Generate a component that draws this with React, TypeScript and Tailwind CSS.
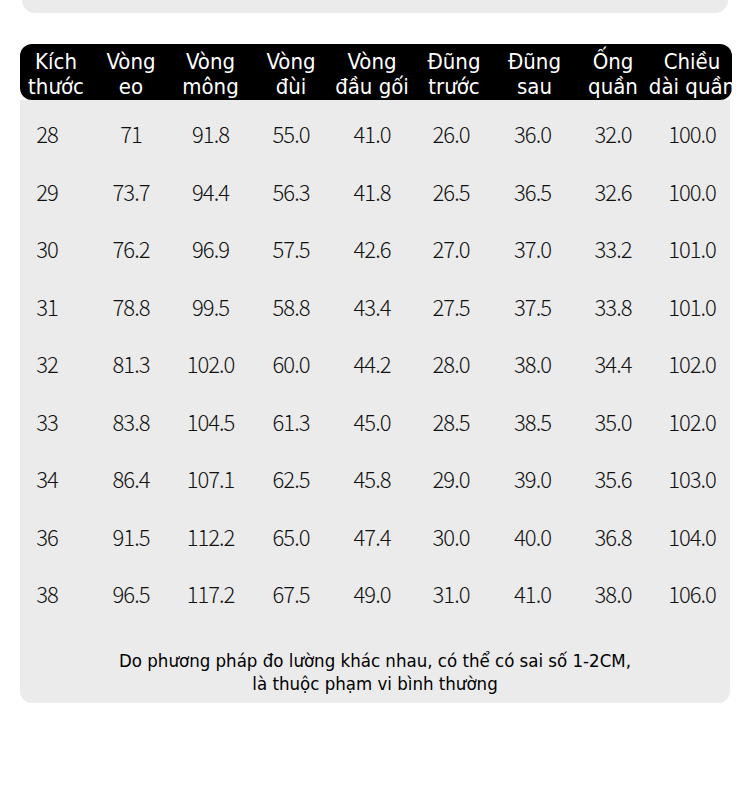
const headers: [string, string][] = [
  ['Kích', 'thước'],
  ['Vòng', 'eo'],
  ['Vòng', 'mông'],
  ['Vòng', 'đùi'],
  ['Vòng', 'đầu gối'],
  ['Đũng', 'trước'],
  ['Đũng', 'sau'],
  ['Ống', 'quần'],
  ['Chiều', 'dài quần'],
];

const rows: string[][] = [
  ['28', '71', '91.8', '55.0', '41.0', '26.0', '36.0', '32.0', '100.0'],
  ['29', '73.7', '94.4', '56.3', '41.8', '26.5', '36.5', '32.6', '100.0'],
  ['30', '76.2', '96.9', '57.5', '42.6', '27.0', '37.0', '33.2', '101.0'],
  ['31', '78.8', '99.5', '58.8', '43.4', '27.5', '37.5', '33.8', '101.0'],
  ['32', '81.3', '102.0', '60.0', '44.2', '28.0', '38.0', '34.4', '102.0'],
  ['33', '83.8', '104.5', '61.3', '45.0', '28.5', '38.5', '35.0', '102.0'],
  ['34', '86.4', '107.1', '62.5', '45.8', '29.0', '39.0', '35.6', '103.0'],
  ['36', '91.5', '112.2', '65.0', '47.4', '30.0', '40.0', '36.8', '104.0'],
  ['38', '96.5', '117.2', '67.5', '49.0', '31.0', '41.0', '38.0', '106.0'],
];

// column widths picked so the centres line up with the picture
const cols = 'grid grid-cols-[72px_78px_81px_80px_82px_82px_79px_78px_80px]';

export default function App() {
  return (
    <div className="w-[750px] h-[786px] bg-white overflow-hidden">
      {/* tail of the panel above */}
      <div className="mx-[22px] h-[13px] bg-[#ebebeb] rounded-b-[14px]" />

      <div className="mx-[20px] w-[712px] mt-[31px]">
        {/* ─── header bar ─── */}
        <div
          className={`${cols} h-[56px] pt-[3px] bg-black rounded-[12px] overflow-hidden items-center text-white text-[22px] leading-[25px]`}
          style={{ fontFamily: '"DejaVu Sans Condensed", "DejaVu Sans", sans-serif' }}
        >
          {headers.map(([a, b], i) => (
            <div key={i} className="flex flex-col items-center whitespace-nowrap">
              <span>{a}</span>
              <span>{b}</span>
            </div>
          ))}
        </div>

        {/* ─── table body ─── */}
        <div className="bg-[#ebebeb] rounded-b-[12px] w-[710px] pt-[5px] pb-[8px]">
          {rows.map((r, ri) => (
            <div
              key={ri}
              className={`${cols} h-[57.5px] items-center text-[#111] text-[22px] tracking-[-1px]`}
              style={{ fontFamily: '"Noto Sans CJK SC", "Noto Sans", sans-serif', fontWeight: 300 }}
            >
              {r.map((v, ci) => (
                <div key={ci} className={`text-center ${ci === 0 ? 'pr-[18px]' : ''} ${ci === 5 ? 'pr-[6px]' : ''} ${ci === 6 ? 'pr-[4px]' : ''}`}>
                  {v}
                </div>
              ))}
            </div>
          ))}

          <div
            className="mt-[26px] text-center text-[18.5px] leading-[23px] text-black"
            style={{ fontFamily: '"DejaVu Sans Condensed", "DejaVu Sans", sans-serif' }}
          >
            <p>Do phương pháp đo lường khác nhau, có thể có sai số 1-2CM,</p>
            <p>là thuộc phạm vi bình thường</p>
          </div>
        </div>
      </div>
    </div>
  );
}
